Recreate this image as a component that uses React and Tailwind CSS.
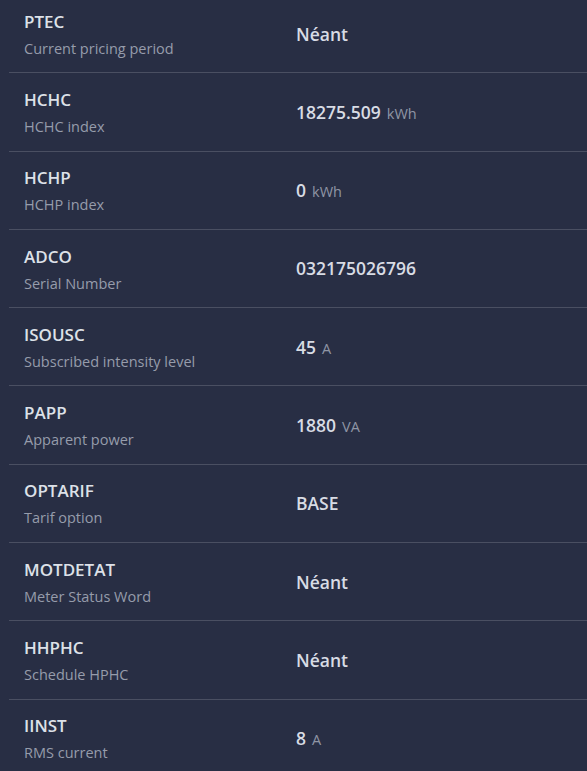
const rows = [
  { name: 'PTEC', desc: 'Current pricing period', value: 'Néant' },
  { name: 'HCHC', desc: 'HCHC index', value: '18275.509', unit: 'kWh' },
  { name: 'HCHP', desc: 'HCHP index', value: '0', unit: 'kWh' },
  { name: 'ADCO', desc: 'Serial Number', value: '032175026796' },
  { name: 'ISOUSC', desc: 'Subscribed intensity level', value: '45', unit: 'A' },
  { name: 'PAPP', desc: 'Apparent power', value: '1880', unit: 'VA' },
  { name: 'OPTARIF', desc: 'Tarif option', value: 'BASE' },
  { name: 'MOTDETAT', desc: 'Meter Status Word', value: 'Néant' },
  { name: 'HHPHC', desc: 'Schedule HPHC', value: 'Néant' },
  { name: 'IINST', desc: 'RMS current', value: '8', unit: 'A' },
];

const App = () => {
  return (
    <div className="min-h-screen bg-[#282e44] overflow-hidden font-['Open_Sans',sans-serif]">
      <div className="-mt-[5px] pl-[9px]">
        {rows.map((row) => (
          <div
            key={row.name}
            className="flex items-center h-[78.3px] border-b border-[#4a4f62]"
          >
            {/* Field name + description */}
            <div className="w-[287px] pl-[15px] pt-[2px] flex flex-col">
              <span className="text-[17px] leading-[24px] font-semibold text-[#dde1e8]">
                {row.name}
              </span>
              <span className="mt-[4px] text-[14.5px] leading-[22px] text-[#969cab]">
                {row.desc}
              </span>
            </div>

            {/* Value */}
            <div className="flex items-baseline gap-[6px]">
              <span className="text-[17.5px] font-semibold text-[#d8dce4]">
                {row.value}
              </span>
              {row.unit && (
                <span className="text-[14.5px] text-[#8f95a4]">{row.unit}</span>
              )}
            </div>
          </div>
        ))}
      </div>
    </div>
  );
};

export default App;
